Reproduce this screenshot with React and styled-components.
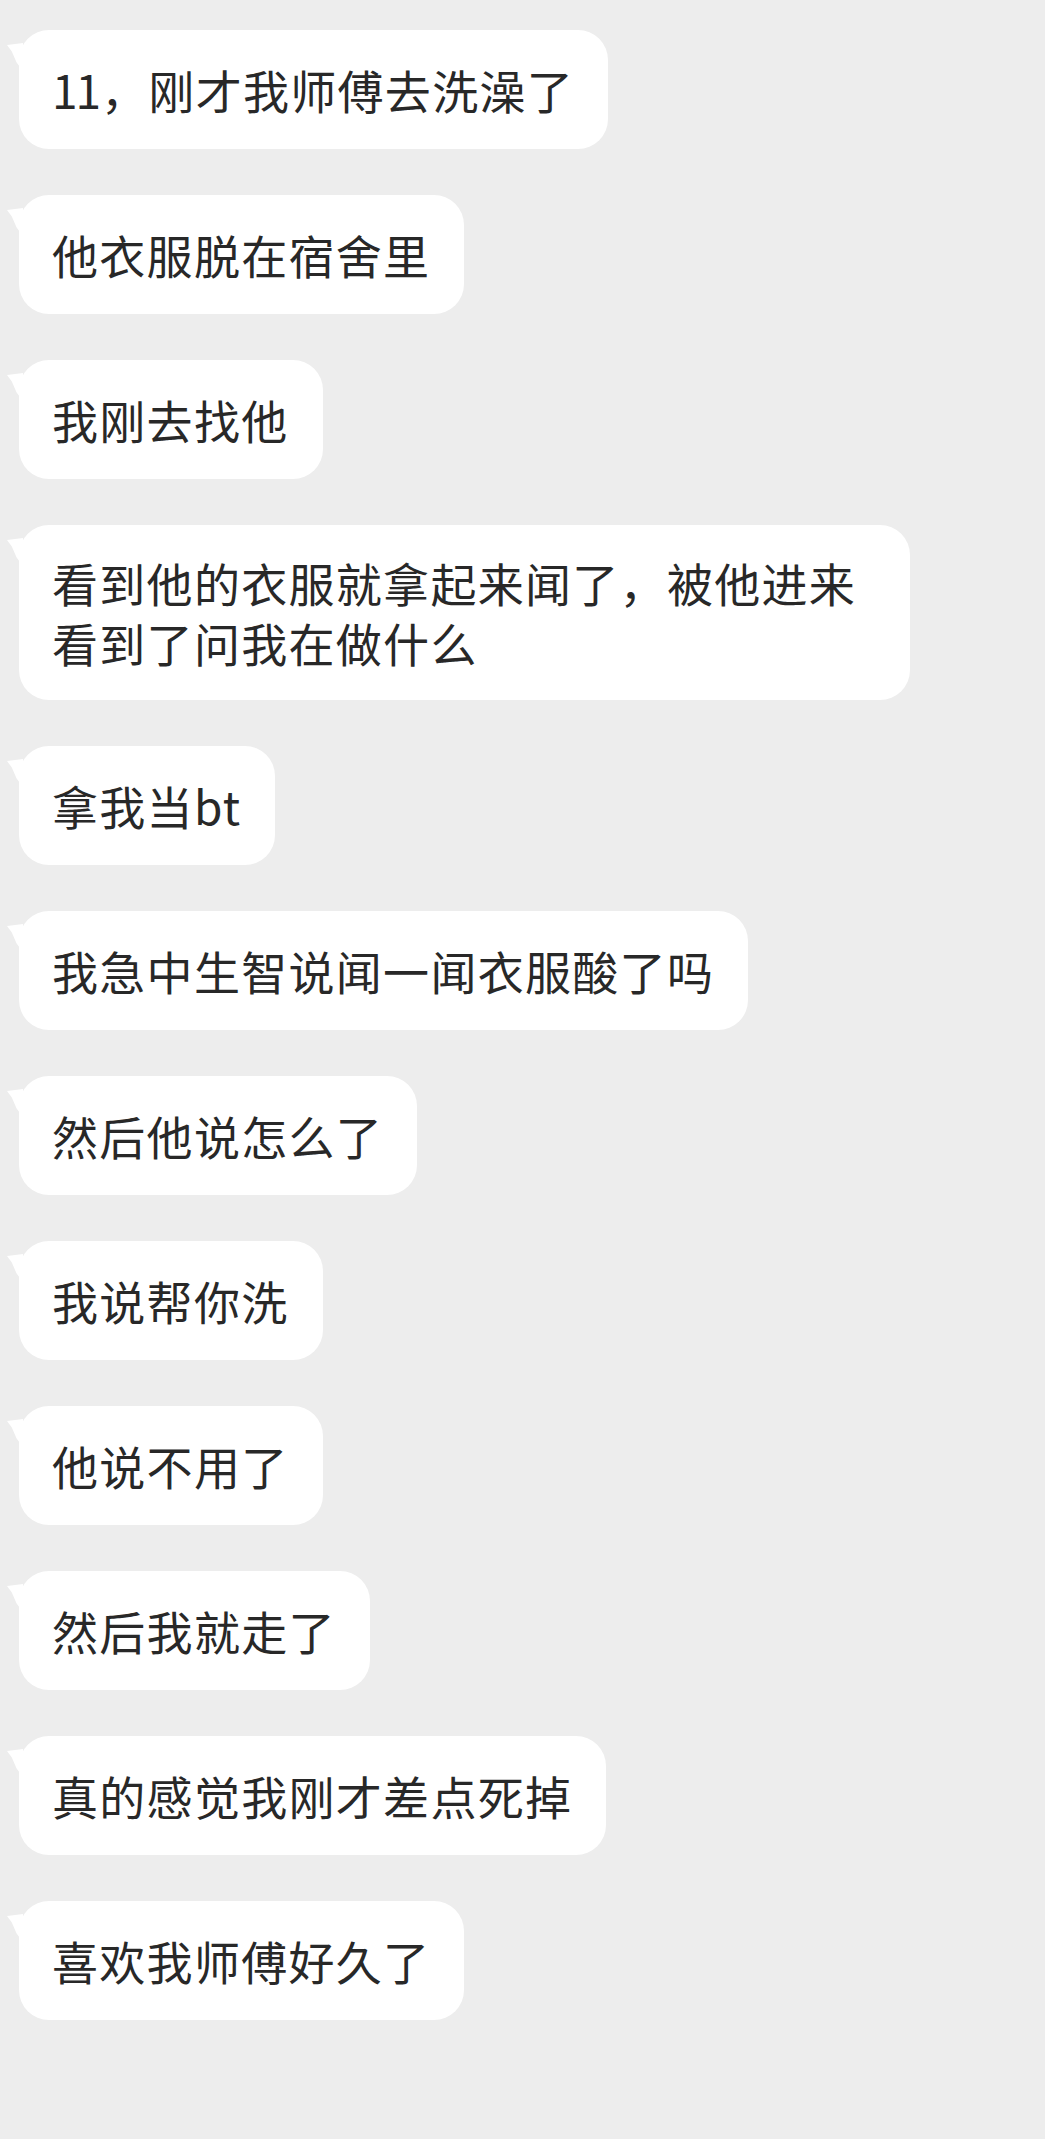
import React from "react";
import styled, { createGlobalStyle } from "styled-components";

const Global = createGlobalStyle`
  html, body {
    margin: 0;
    padding: 0;
    background: #ededed;
  }
  #root { min-height: 100vh; }
`;

const Chat = styled.div`
  display: flex;
  flex-direction: column;
  align-items: flex-start;
  gap: 46px;
  padding: 30px 0 80px 19px;
  min-height: 2139px;
  box-sizing: border-box;
  background: #ededed;
  font-family: "Noto Sans CJK SC", "Noto Sans", sans-serif;
`;

const Bubble = styled.div`
  position: relative;
  box-sizing: border-box;
  max-width: 891px;
  padding: ${(p) => (p.$multi ? "27px 34px 28px 33px" : "29px 34px 30px 33px")};
  background: #ffffff;
  border-radius: 30px;
  color: #282828;
  font-size: 46px;
  line-height: 60px;
  letter-spacing: 1.3px;
  &::before {
    content: "";
    position: absolute;
    left: -12px;
    top: 13px;
    width: 16px;
    height: 28px;
    background: #ffffff;
    clip-path: polygon(0 2px, 100% 0, 100% 100%, 60% 70%, 30% 30%);
  }
`;

const Num = styled.span`
  letter-spacing: -2px;
  margin-right: 2px;
`;

const messages = [
  ["11", "，刚才我师傅去洗澡了"],
  ["", "他衣服脱在宿舍里"],
  ["", "我刚去找他"],
  ["", "看到他的衣服就拿起来闻了，被他进来看到了问我在做什么"],
  ["", "拿我当bt"],
  ["", "我急中生智说闻一闻衣服酸了吗"],
  ["", "然后他说怎么了"],
  ["", "我说帮你洗"],
  ["", "他说不用了"],
  ["", "然后我就走了"],
  ["", "真的感觉我刚才差点死掉"],
  ["", "喜欢我师傅好久了"],
];

export default function App() {
  return (
    <>
      <Global />
      <Chat>
        {messages.map(([num, text], i) => (
          <Bubble key={i} $multi={text.length > 17}>
            {num && <Num>{num}</Num>}
            {text}
          </Bubble>
        ))}
      </Chat>
    </>
  );
}
